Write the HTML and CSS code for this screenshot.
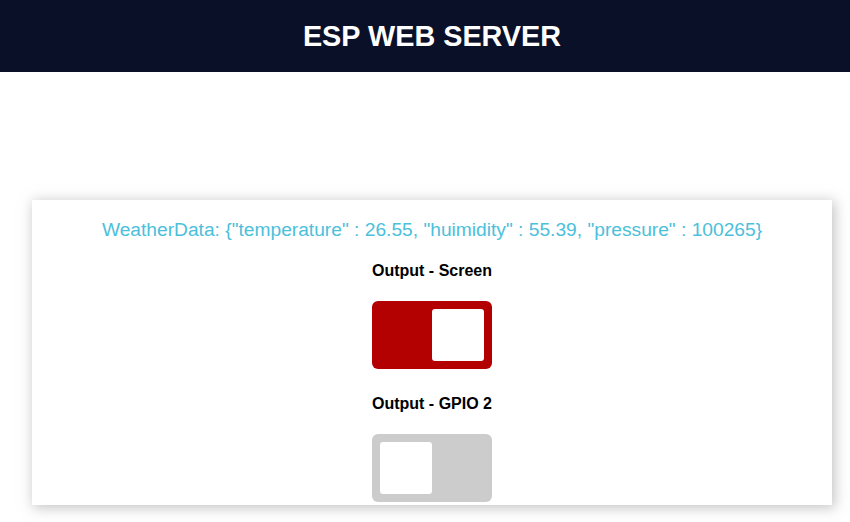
FILE: index.html
```html
<!DOCTYPE html>
<html>
<head>
<meta charset="utf-8">
<title>ESP Web Server</title>
<link rel="stylesheet" href="styles.css">
</head>
<body>
<div class="topnav">
  <h1>ESP WEB SERVER</h1>
</div>
<div class="content">
  <div class="card">
    <p class="reading">WeatherData: {"temperature" : 26.55, "huimidity" : 55.39, "pressure" : 100265}</p>
    <h4>Output - Screen</h4>
    <label class="switch"><input type="checkbox" checked><span class="slider"></span></label>
    <h4>Output - GPIO 2</h4>
    <label class="switch"><input type="checkbox"><span class="slider"></span></label>
  </div>
</div>
</body>
</html>
```
FILE: styles.css
```css
html, body {
  margin: 0;
  padding: 0;
  font-family: "Liberation Sans", Arial, sans-serif;
  background: #fff;
  overflow: hidden;
}
body {
  min-height: 522px;
}
.topnav {
  background-color: #0b1029;
  height: 72px;
  display: flex;
  align-items: center;
  justify-content: center;
  padding-left: 14px;
}
.topnav h1 {
  margin: 0;
  color: #fff;
  font-size: 28.8px;
  font-weight: bold;
  line-height: 33px;
}
.content {
  padding: 128px 0 17px 32px;
}
.card {
  width: 800px;
  height: 305px;
  box-sizing: border-box;
  background: #fff;
  box-shadow: 2px 2px 12px 1px rgba(140, 140, 140, 0.5);
  display: flex;
  flex-direction: column;
  align-items: center;
  padding-top: 19px;
  overflow: hidden;
}
.reading {
  margin: 0;
  font-size: 19.2px;
  line-height: 22px;
  color: #4cc0db;
}
.card h4 {
  margin: 21px 0 21px;
  font-size: 16px;
  line-height: 18px;
  color: #000;
}
.switch {
  position: relative;
  display: block;
  width: 120px;
  height: 68px;
}
.switch input {
  display: none;
}
.slider {
  position: absolute;
  inset: 0;
  background-color: #ccc;
  border-radius: 6px;
}
.slider::before {
  content: "";
  position: absolute;
  width: 52px;
  height: 52px;
  left: 8px;
  bottom: 8px;
  background-color: #fff;
  border-radius: 3px;
}
input:checked + .slider {
  background-color: #b30000;
}
input:checked + .slider::before {
  transform: translateX(52px);
}
.switch + h4 {
  margin-top: 26px;
}
```
